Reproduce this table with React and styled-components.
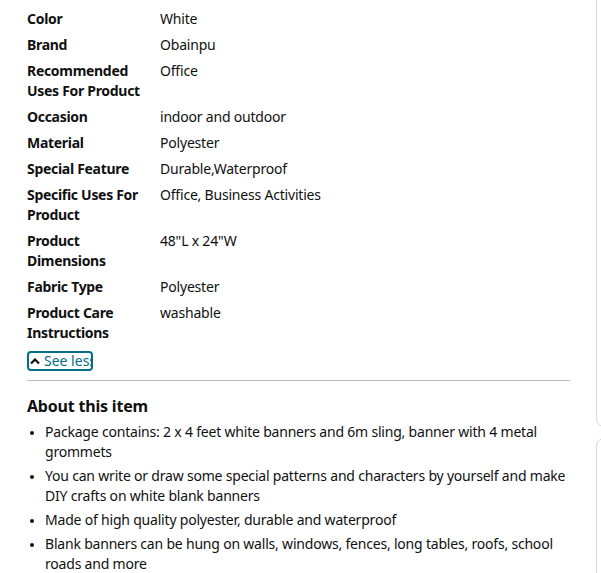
import React from 'react';
import styled, { createGlobalStyle } from 'styled-components';

const GlobalStyle = createGlobalStyle`
  html, body {
    margin: 0;
    padding: 0;
    background: #fff;
  }
  body {
    font-family: "Noto Sans", "Open Sans", Arial, sans-serif;
    font-size: 14px;
    line-height: 20px;
    letter-spacing: -0.2px;
    color: #0f1111;
    overflow: hidden;
  }
`;

const Page = styled.div`
  position: relative;
  width: 601px;
  height: 573px;
  overflow: hidden;
`;

const SidePanel = styled.div`
  position: absolute;
  left: 596px;
  top: ${(p) => p.top}px;
  width: 300px;
  height: ${(p) => p.height}px;
  border: 1px solid #d5d9d9;
  border-radius: 8px;
`;

const Content = styled.div`
  width: 543px;
  padding: 9px 0 0 27px;
`;

const SpecTable = styled.div`
  display: grid;
  grid-template-columns: 133px 1fr;
  row-gap: 6px;
`;

const Label = styled.div`
  font-weight: 700;
  letter-spacing: -0.3px;
  padding-right: 10px;
`;

const Value = styled.div`
  font-weight: 400;
`;

const SeeLess = styled.button`
  display: flex;
  align-items: center;
  gap: 4px;
  margin-top: 8px;
  height: 20px;
  width: 66px;
  padding: 0 0 0 1px;
  overflow: hidden;
  white-space: nowrap;
  background: none;
  border: 2px solid #007185;
  border-radius: 4px;
  font: inherit;
  color: #007185;
  cursor: pointer;
`;

const Divider = styled.hr`
  border: 0;
  border-top: 1px solid #bbbfbf;
  margin: 9px 0 0;
`;

const Heading = styled.h3`
  font-size: 16px;
  line-height: 24px;
  font-weight: 700;
  letter-spacing: -0.2px;
  margin: 13px 0 0;
`;

const Bullets = styled.ul`
  margin: 4px 0 0;
  padding: 0 0 0 18px;
`;

const Bullet = styled.li`
  margin-bottom: 4px;
  &::marker {
    font-size: 12px;
  }
`;

const specs = [
  ['Color', 'White'],
  ['Brand', 'Obainpu'],
  ['Recommended Uses For Product', 'Office'],
  ['Occasion', 'indoor and outdoor'],
  ['Material', 'Polyester'],
  ['Special Feature', 'Durable,Waterproof'],
  ['Specific Uses For Product', 'Office, Business Activities'],
  ['Product Dimensions', '48"L x 24"W'],
  ['Fabric Type', 'Polyester'],
  ['Product Care Instructions', 'washable'],
];

const bullets = [
  'Package contains: 2 x 4 feet white banners and 6m sling, banner with 4 metal grommets',
  'You can write or draw some special patterns and characters by yourself and make DIY crafts on white blank banners',
  'Made of high quality polyester, durable and waterproof',
  'Blank banners can be hung on walls, windows, fences, long tables, roofs, school roads and more',
];

const App = () => (
  <Page>
    <GlobalStyle />
    <SidePanel top={-20} height={445} />
    <SidePanel top={438} height={300} />
    <Content>
      <SpecTable>
        {specs.map(([k, v]) => (
          <React.Fragment key={k}>
            <Label>{k}</Label>
            <Value>{v}</Value>
          </React.Fragment>
        ))}
      </SpecTable>
      <SeeLess>
        <svg width="10" height="8" viewBox="0 0 10 8" style={{ flexShrink: 0 }}>
          <path d="M1 6.5 L5 2.5 L9 6.5" fill="none" stroke="#0f1111" strokeWidth="2.2" />
        </svg>
        See less
      </SeeLess>
      <Divider />
      <Heading>About this item</Heading>
      <Bullets>
        {bullets.map((b) => (
          <Bullet key={b}>{b}</Bullet>
        ))}
      </Bullets>
    </Content>
  </Page>
);

export default App;
